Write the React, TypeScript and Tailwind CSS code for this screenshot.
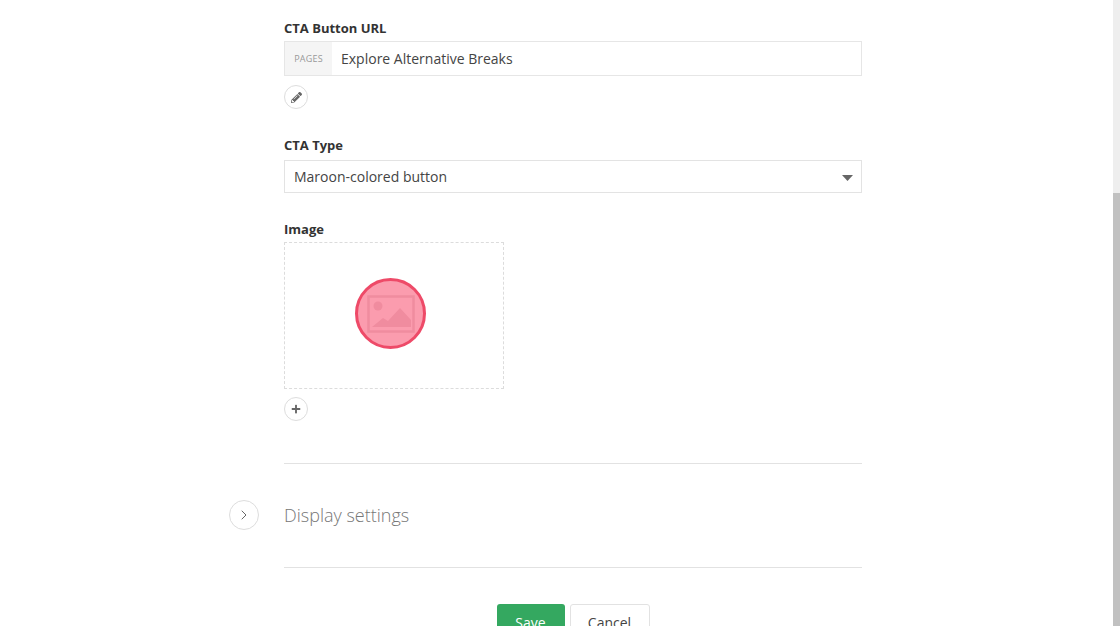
import { ChevronRight } from "lucide-react";
import { FaPencilAlt, FaPlus } from "react-icons/fa";

function Label({ children }: { children: string }) {
  return <div className="text-[13px] leading-[18px] font-bold text-[#333]">{children}</div>;
}

function RoundButton({ children }: { children: React.ReactNode }) {
  return (
    <button className="flex h-6 w-6 items-center justify-center rounded-full border border-[#ddd] bg-white text-[#666]">
      {children}
    </button>
  );
}

export default function App() {
  return (
    <div className="relative h-[626px] w-[1120px] overflow-hidden bg-white font-['Open_Sans',sans-serif] text-[#444]">
      {/* scrollbar */}
      <div className="absolute top-0 right-0 h-full w-[7px] bg-[#eeeeee]">
        <div className="mt-[193px] h-[433px] bg-[#c1c1c1]" />
      </div>

      <div className="ml-[284px] flex w-[578px] flex-col pt-[19px]">
        <Label>CTA Button URL</Label>
        <div className="mt-[4px] flex h-[35px] border border-[#e6e6e6]">
          <div className="flex w-[47px] items-center justify-center bg-[#f5f5f5] text-[9px] tracking-[0.2px] text-[#999]">
            PAGES
          </div>
          <div className="flex items-center pl-[9px] text-[14px] text-[#444]">Explore Alternative Breaks</div>
        </div>
        <div className="mt-[9px]">
          <RoundButton>
            <FaPencilAlt className="h-[11px] w-[11px]" />
          </RoundButton>
        </div>

        <div className="mt-[27px]">
          <Label>CTA Type</Label>
        </div>
        <div className="relative mt-[6px] flex h-[33px] items-center border border-[#e3e3e3] pl-[9px] text-[14px] text-[#444]">
          Maroon-colored button
          <svg className="absolute top-[14px] right-[8px]" width="11" height="6" viewBox="0 0 11 6">
            <path d="M0 0h11L5.5 6z" fill="#666" />
          </svg>
        </div>

        <div className="mt-[27px]">
          <Label>Image</Label>
        </div>
        <div className="relative mt-[4px] h-[147px] w-[220px] border border-dashed border-[#dcdcdc]">
          {/* red highlight over the image placeholder */}
          <div className="absolute top-[35px] left-[70px] flex h-[71px] w-[71px] items-center justify-center rounded-full border-[3px] border-[#ee4a68] bg-[#fb9cae]">
            <svg width="48" height="38" viewBox="0 0 48 38" fill="none">
              <rect x="1.5" y="1.5" width="45" height="35" stroke="#f08c9f" strokeWidth="2.5" />
              <circle cx="11" cy="11" r="4.5" fill="#f08c9f" />
              <path d="M5 32l11-9 5 3 12-13 11 12v7z" fill="#f08c9f" />
            </svg>
          </div>
        </div>
        <div className="mt-[8px]">
          <RoundButton>
            <FaPlus className="h-[10px] w-[10px]" />
          </RoundButton>
        </div>

        <div className="mt-[42px] h-px bg-[#e2e2e2]" />

        <div className="relative flex h-[103px] items-center">
          <div className="absolute top-[36px] left-[-55px] flex h-[30px] w-[30px] items-center justify-center rounded-full border border-[#ddd] text-[#666]">
            <ChevronRight size={16} strokeWidth={1.5} />
          </div>
          <div className="text-[18px] font-light text-[#777]">Display settings</div>
        </div>

        <div className="h-px bg-[#e2e2e2]" />

        <div className="mt-[36px] flex justify-center gap-[5px]">
          <button className="h-[36px] w-[68px] rounded-[3px] bg-[#34a860] text-[14px] text-white">Save</button>
          <button className="h-[36px] w-[80px] rounded-[3px] border border-[#e2e2e2] bg-white text-[14px] text-[#444]">
            Cancel
          </button>
        </div>
      </div>
    </div>
  );
}
